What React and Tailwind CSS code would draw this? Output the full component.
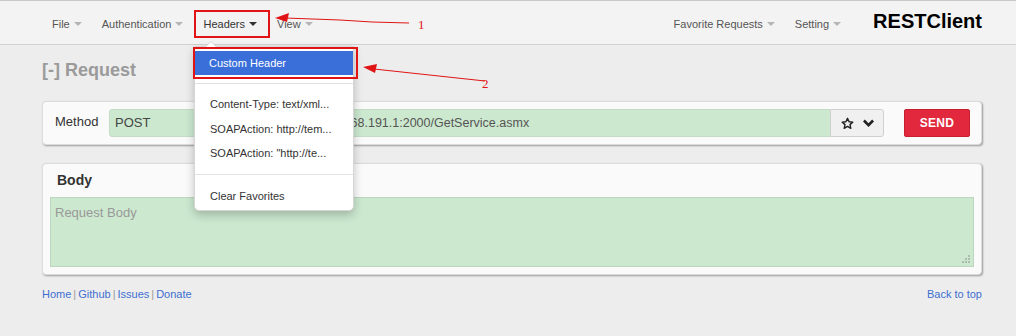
import React from 'react';

const font = "font-['Liberation_Sans',Arial,sans-serif]";

function Caret({ dark }) {
  return (
    <span
      className={`inline-block ml-[4px] w-0 h-0 border-l-[4px] border-r-[4px] border-t-[4px] border-l-transparent border-r-transparent align-middle ${
        dark ? 'border-t-[#333]' : 'border-t-[#b5b5b5]'
      }`}
    />
  );
}

function NavItem({ label, dark }) {
  return (
    <div className={`px-[10px] pt-[3px] flex items-center text-[11px] ${dark ? 'text-[#333]' : 'text-[#555]'}`}>
      {label}
      <Caret dark={dark} />
    </div>
  );
}

function DropItem({ children }) {
  return <div className="h-[24.5px] flex items-center px-[15px] text-[11px] text-[#333]">{children}</div>;
}

function Sep() {
  return <span className="mx-[2px] text-[#9a9a9a]">|</span>;
}

export default function App() {
  return (
    <div className={`relative w-[1016px] h-[336px] bg-[#ededed] overflow-hidden ${font}`}>
      {/* Navbar */}
      <div className="h-[45px] bg-[#f3f3f3] border-t border-[#c8c8c8] border-b border-b-[#d2d2d2]">
        <div className="ml-[42px] w-[940px] h-full flex items-center justify-between">
          <div className="flex items-center h-full">
            <NavItem label="File" />
            <NavItem label="Authentication" />
            <NavItem label="Headers" dark />
            <NavItem label="View" />
          </div>
          <div className="flex items-center h-full">
            <NavItem label="Favorite Requests" />
            <NavItem label="Setting" />
            <div className="pl-[22px] text-[20px] font-bold text-black leading-none -mt-[4px]">RESTClient</div>
          </div>
        </div>
      </div>

      {/* Main */}
      <div className="ml-[42px] w-[940px]">
        <h2 className="mt-[14px] h-[22px] text-[18px] font-bold text-[#9a9a9a] leading-[22px]">[-] Request</h2>

        <div className="mt-[20px] h-[44px] bg-[#fafafa] border border-[#dcdcdc] rounded-[4px] shadow-[1px_1px_2px_rgba(0,0,0,0.35)] flex items-center pl-[12px] pr-[11px]">
          <span className="text-[13px] text-[#333] w-[54px] -mt-[3px]">Method</span>
          <div className="flex-1 flex h-[28px]">
            <div className="w-[176px] bg-[#cce8cf] border border-[#c4dcc6] rounded-l-[3px] flex items-center pl-[5px] text-[13px] text-[#444]">
              POST
            </div>
            <div className="flex-1 bg-[#cce8cf] border-y border-[#c4dcc6] flex items-center pl-[3px] text-[12.5px] text-[#555] whitespace-nowrap overflow-hidden">
              http://192.168.191.1:2000/GetService.asmx
            </div>
            <div className="w-[54px] bg-[#f0f0f0] border border-[#d0d0d0] rounded-r-[3px] flex items-center justify-center gap-[9px]">
              <svg width="13" height="13" viewBox="0 0 24 24" fill="none" stroke="#222" strokeWidth="2.6" strokeLinejoin="round">
                <path d="M12 2.5l2.9 6.3 6.8.7-5.1 4.6 1.5 6.8L12 17.4l-6.1 3.5 1.5-6.8-5.1-4.6 6.8-.7z" />
              </svg>
              <svg width="11" height="9" viewBox="0 0 12 9" fill="#222">
                <path d="M0 2.2L2 0.2 6 4.2 10 0.2 12 2.2 6 8.2z" />
              </svg>
            </div>
          </div>
          <button className="ml-[20px] w-[66px] h-[28px] bg-[#e2283c] rounded-[2px] border border-[#c81f31] text-white text-[12px] font-bold tracking-[0.3px]">
            SEND
          </button>
        </div>

        <div className="mt-[18px] h-[112px] bg-[#fafafa] border border-[#dcdcdc] rounded-[4px] shadow-[1px_1px_2px_rgba(0,0,0,0.35)] px-[7px] flex flex-col">
          <div className="h-[33px] flex items-center pl-[7px] text-[14px] font-bold text-[#333]">Body</div>
          <div className="relative h-[70px] bg-[#cce8cf] border border-[#bcd6bf] pl-[4px] pt-[5px] text-[13px] text-[#999]">
            Request Body
            <svg className="absolute right-[3px] bottom-[3px]" width="8" height="8" viewBox="0 0 8 8" fill="#a9bfab">
              <rect x="6" y="0" width="2" height="2" />
              <rect x="3" y="3" width="2" height="2" />
              <rect x="6" y="3" width="2" height="2" />
              <rect x="0" y="6" width="2" height="2" />
              <rect x="3" y="6" width="2" height="2" />
              <rect x="6" y="6" width="2" height="2" />
            </svg>
          </div>
        </div>

        <div className="mt-[11px] flex justify-between text-[11px] text-[#3f6fd0]">
          <div className="flex">
            <span>Home</span>
            <Sep />
            <span>Github</span>
            <Sep />
            <span>Issues</span>
            <Sep />
            <span>Donate</span>
          </div>
          <div>Back to top</div>
        </div>
      </div>

      {/* Dropdown menu */}
      <div className="absolute left-[194px] top-[46px] w-[160px] h-[165px] bg-white border border-[#d6d6d6] rounded-b-[5px] shadow-[0_4px_10px_rgba(0,0,0,0.22)] pt-[4px]">
        <div className="absolute -top-[6px] left-[10px] w-0 h-0 border-l-[6px] border-r-[6px] border-b-[6px] border-l-transparent border-r-transparent border-b-[#d6d6d6]" />
        <div className="absolute -top-[5px] left-[11px] w-0 h-0 border-l-[5px] border-r-[5px] border-b-[5px] border-l-transparent border-r-transparent border-b-white" />
        <div className="h-[24px] bg-[#3a6fd9] text-white text-[11px] flex items-center px-[14px]">Custom Header</div>
        <div className="mt-[8px] mb-[8px] h-px bg-[#e2e2e2]" />
        <DropItem>Content-Type: text/xml...</DropItem>
        <DropItem>SOAPAction: http://tem...</DropItem>
        <DropItem>SOAPAction: "http://te...</DropItem>
        <div className="mt-[8px] mb-[9px] h-px bg-[#e2e2e2]" />
        <DropItem>Clear Favorites</DropItem>
      </div>

      {/* Annotations */}
      <div className="absolute left-[194px] top-[10px] w-[76px] h-[28px] border-2 border-[#e01414]" />
      <div className="absolute left-[193px] top-[47px] w-[165px] h-[32px] border-2 border-[#e01414]" />
      <svg className="absolute left-0 top-0 pointer-events-none" width="1016" height="336">
        <polyline points="409,23 372,22 340,20 285,18" fill="none" stroke="#e01414" strokeWidth="1" />
        <polygon points="275,18 289,13 287,22" fill="#e01414" />
        <line x1="485" y1="81" x2="374" y2="69" stroke="#e01414" strokeWidth="1" />
        <polygon points="363,67 377,64 375,73" fill="#e01414" />
        <text x="418" y="29" fill="#e01414" fontSize="13" fontFamily="Liberation Serif, serif">1</text>
        <text x="482" y="88" fill="#e01414" fontSize="13" fontFamily="Liberation Serif, serif">2</text>
      </svg>
    </div>
  );
}
